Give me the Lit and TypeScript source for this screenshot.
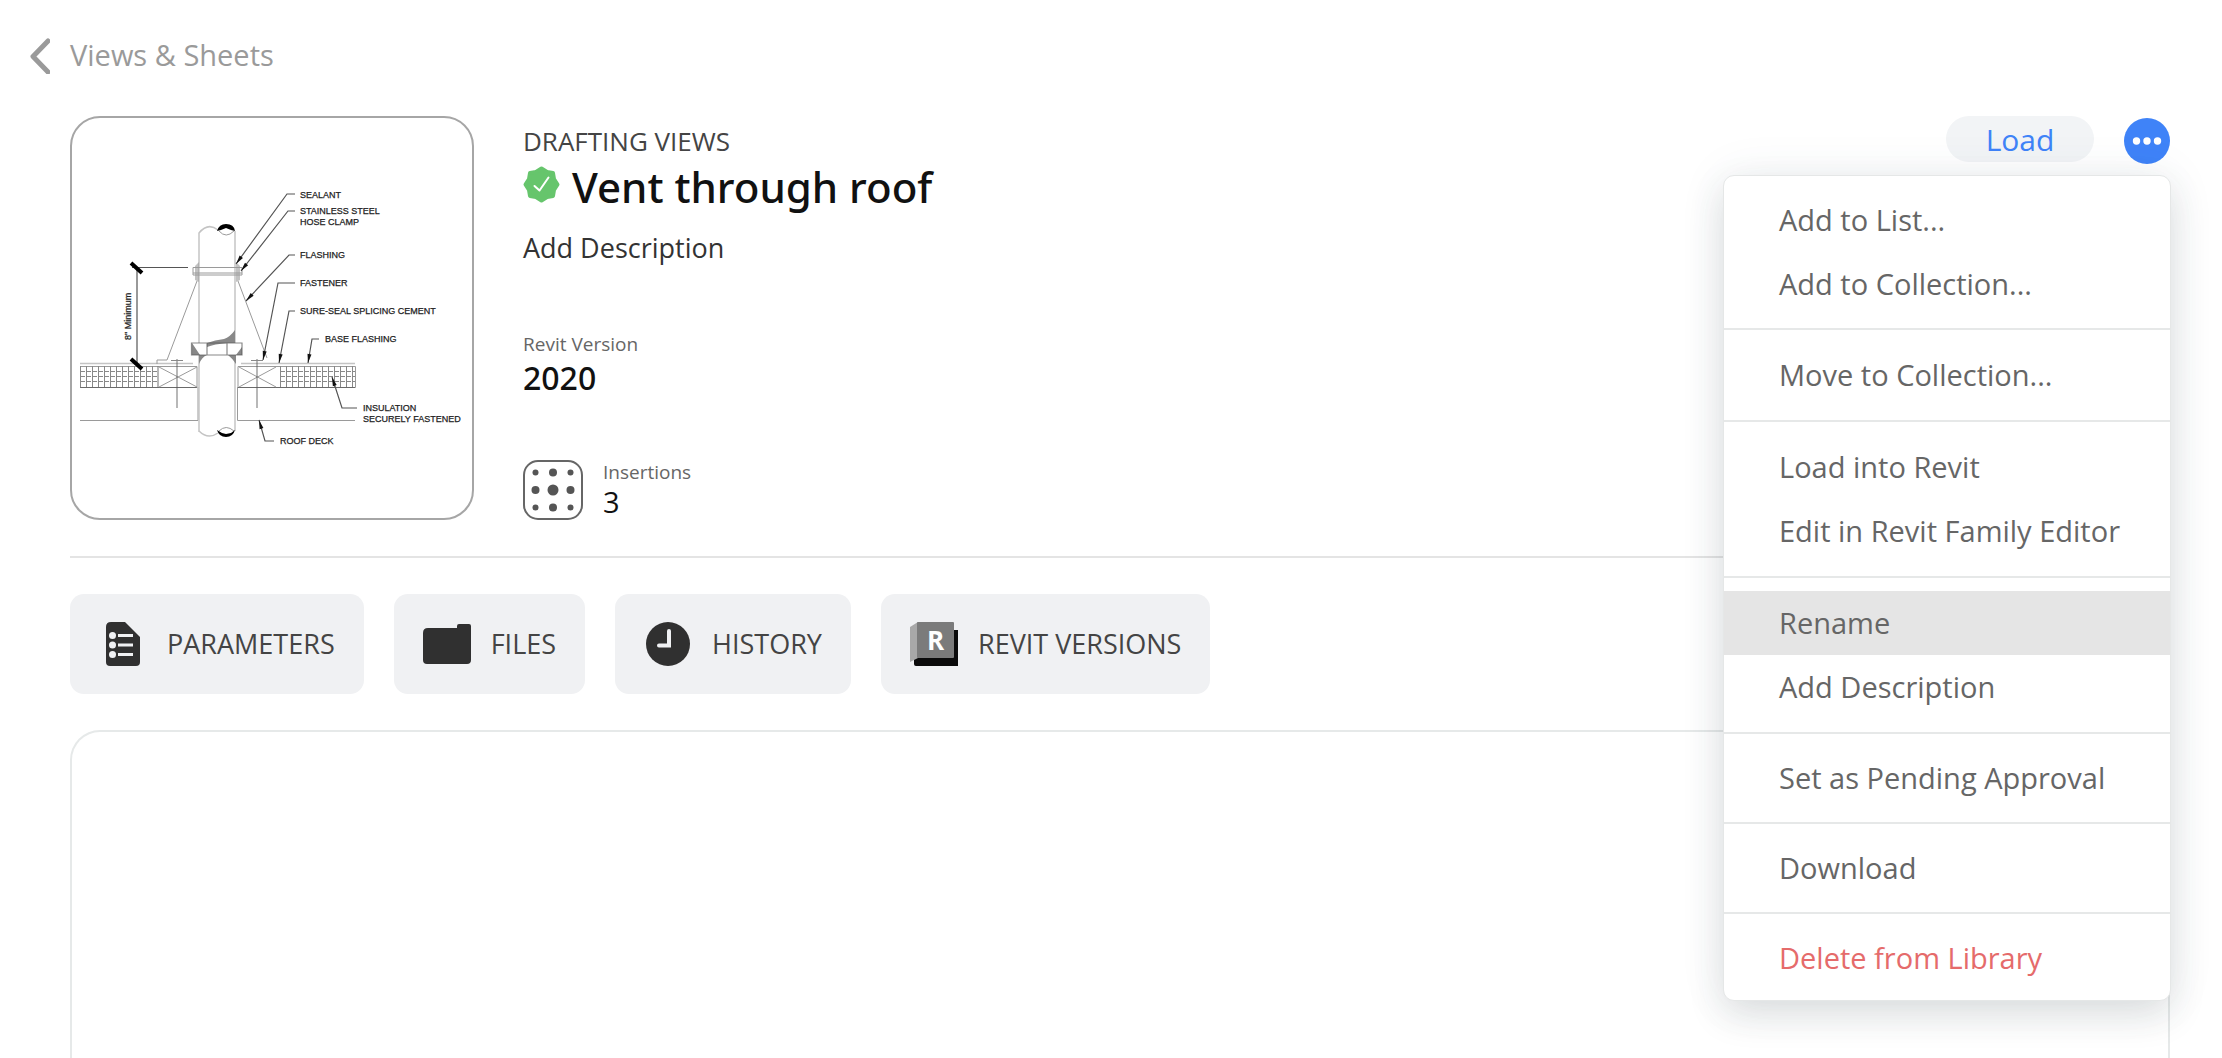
import { LitElement, html, svg, css } from "lit";
import { customElement, state } from "lit/decorators.js";
import { classMap } from "lit/directives/class-map.js";

interface MenuItem {
  label: string;
  active?: boolean;
  danger?: boolean;
}

const MENU: MenuItem[][] = [
  [{ label: "Add to List..." }, { label: "Add to Collection..." }],
  [{ label: "Move to Collection..." }],
  [{ label: "Load into Revit" }, { label: "Edit in Revit Family Editor" }],
  [{ label: "Rename", active: true }, { label: "Add Description" }],
  [{ label: "Set as Pending Approval" }],
  [{ label: "Download" }],
  [{ label: "Delete from Library", danger: true }],
];

/** Section drawing of a vent pipe passing through a roof. */
@customElement("vent-drawing")
export class VentDrawing extends LitElement {
  static styles = css`
    :host { display: block; }
    .drawing { display: block; width: 100%; height: auto; }
    .thin { fill: none; stroke: #9a9a9a; stroke-width: 1; }
    .pale { fill: none; stroke: #c4c4c4; stroke-width: 1.5; }
    .grid { fill: none; stroke: #888; stroke-width: 1; }
    .line { fill: none; stroke: #555; stroke-width: 1.2; }
    .tick { fill: none; stroke: #000; stroke-width: 4; }
    .head { fill: #111; }
    .note { font: 9px "Liberation Sans", Arial, sans-serif; fill: #222; stroke: #222; stroke-width: 0.25; }
  `;

  private notes: [number, number, string][] = [
    [300, 198, "SEALANT"],
    [300, 214, "STAINLESS STEEL"],
    [300, 225, "HOSE CLAMP"],
    [300, 258, "FLASHING"],
    [300, 286, "FASTENER"],
    [300, 314, "SURE-SEAL SPLICING CEMENT"],
    [325, 342, "BASE FLASHING"],
    [363, 411, "INSULATION"],
    [363, 422, "SECURELY FASTENED"],
    [280, 444, "ROOF DECK"],
  ];

  /** Each leader: start, elbow, tip. */
  private leaders: number[][] = [
    [295, 194, 287, 194, 236, 264],
    [295, 211, 288, 211, 241, 271],
    [295, 255, 289, 255, 246, 301],
    [295, 283, 278, 283, 263, 360],
    [295, 311, 289, 311, 279, 363],
    [319, 339, 312, 339, 308, 363],
    [357, 408, 342, 408, 332, 377],
    [274, 441, 265, 441, 259, 420],
  ];

  private leader([x0, y0, x1, y1, x2, y2]: number[]) {
    const len = Math.hypot(x2 - x1, y2 - y1);
    const ux = (x2 - x1) / len;
    const uy = (y2 - y1) / len;
    const bx = x2 - ux * 9;
    const by = y2 - uy * 9;
    return svg`
      <path class="line" d="M${x0} ${y0}H${x1}L${x2} ${y2}" />
      <path class="head" d="M${x2} ${y2}L${bx - uy * 2} ${by + ux * 2}L${bx + uy * 2} ${by - ux * 2}Z" />`;
  }

  private hatch(from: number, to: number) {
    const cols = [];
    for (let x = from; x <= to; x += 6) cols.push(svg`<path class="grid" d="M${x + 0.5} 366V387" />`);
    return svg`${cols}<path class="grid" stroke-dasharray="5 1" d="M${from} 371.5H${to}M${from} 376.5H${to}M${from} 381.5H${to}" />`;
  }

  render() {
    return html`
      <svg class="drawing" viewBox="72 118 400 400" role="img" aria-label="Vent through roof section">
        <path class="pale" d="M80 363.5H193M241 363.5H355" />
        <path class="thin" d="M80.5 366.5H197V387.5H80.5ZM238 366.5H355.5V387.5H238Z" />
        ${this.hatch(80, 157)} ${this.hatch(280, 355)}
        <path class="line" d="M158 366.5V387M80 387.5H197M238 387.5H355" stroke-opacity=".7" />
        <path class="thin" d="M159 367L197 387M159 387L197 367M239 367L276 387M239 387L276 367" />
        <path class="line" stroke-opacity=".7" d="M177 359V408M171 360.5H183M257 359V408M251 360.5H263" />
        <path class="thin" d="M80 420.5H198V387M355 420.5H237.5V387" />
        <path class="thin" d="M197 281L167 360H157V364M238 281L267 358" />
        <path d="M199 233Q208 222 217 230L235 231V431L217 433Q208 440 199 431Z" fill="#fff" />
        <path class="pale" d="M199 432V233Q208 222 218 230M235 231V431M199 431Q208 440 218 433" />
        <path d="M217 231Q219 224 226 224Q234 224 235 231L231 230L226 228L221 230Z" fill="#000" />
        <path class="thin" d="M219 231Q226 239 234 231M219 431Q226 424 234 431" />
        <path d="M217 430L222 433L226 434L231 433L235 430Q233 437 226 437Q219 437 217 430Z" fill="#000" />
        <path class="thin" d="M193 267.5H242V275H193ZM193 273H242" />
        <path d="M199 262L195 266V280L199 282ZM236 262L240 266V280L236 282Z" fill="#999" fill-opacity=".6" />
        <path d="M235 330V343H207Q215 340 224 339Q230 337 235 330ZM199 355H207Q202 357 199 364ZM228 355H236V364Q232 358 228 355Z" fill="#888" />
        <path d="M191.5 343H242V355H191.5Z" fill="#fff" />
        <path d="M192 343V355H200ZM242 347V355H236ZM207 343H228Q214 344 207 347Z" fill="#888" />
        <path class="line" stroke-opacity=".7" d="M191.5 343H242V355H191.5ZM207 343V355M227 343V355" />
        <path class="line" d="M132 267.5H188M137 267V364" />
        <path class="tick" d="M131 263L142 273M131 359L142 369" />
        ${this.leaders.map((l) => this.leader(l))}
        ${this.notes.map(([x, y, t]) => svg`<text class="note" x=${x} y=${y}>${t}</text>`)}
        <text class="note" transform="translate(131 340) rotate(-90)">8" Minimum</text>
      </svg>`;
  }
}

@customElement("app-root")
export class AppRoot extends LitElement {
  static styles = css`
    :host {
      display: block;
      font-family: "Open Sans", "Noto Sans", sans-serif;
      color: #111;
      background: #fff;
    }
    * { box-sizing: border-box; }
    button { font: inherit; color: inherit; border: 0; padding: 0; background: none; cursor: pointer; }
    svg { display: block; flex: none; }
    .page { display: flex; flex-direction: column; min-height: 100vh; padding: 36px 52px 0 28px; }
    .back { display: flex; align-items: center; gap: 20px; align-self: flex-start; height: 40px; font-size: 29px; line-height: 40px; color: #9a9a9a; text-decoration: none; }
    .back span { padding-bottom: 2px; }
    .content { display: flex; flex-direction: column; flex: 1; margin: 40px 0 0 42px; }
    .summary { display: flex; align-items: stretch; gap: 49px; padding-bottom: 36px; border-bottom: 2px solid #e4e4e4; }
    .thumb { flex: none; width: 404px; height: 404px; border: 2px solid #a6a6a6; border-radius: 30px; overflow: hidden; }
    .info { display: flex; flex-direction: column; flex: 1; }
    .kind { margin-top: 11px; font-size: 26px; line-height: 28px; color: #444; }
    .name { display: flex; align-items: center; gap: 12px; margin: 0; font-family: "Noto Sans", "Open Sans", sans-serif; font-size: 42px; line-height: 63px; font-weight: 500; }
    .name svg { margin-bottom: 4px; }
    .desc { align-self: flex-start; margin-top: 10px; font-size: 27px; line-height: 40px; color: #333; }
    .label { font-size: 19px; line-height: 24px; color: #666; }
    .value { font-family: "Noto Sans", "Open Sans", sans-serif; font-size: 32px; line-height: 44px; font-weight: 500; }
    .version { margin-top: 64px; }
    .insertions { display: flex; align-items: center; gap: 20px; margin-top: auto; height: 60px; }
    .count { font-size: 29px; line-height: 36px; }
    .actions { position: relative; display: flex; align-items: flex-start; gap: 30px; }
    .load { width: 148px; height: 46px; padding-top: 2px; border-radius: 24px; background: #f2f4f6; color: #3f83f8; font-size: 30px; line-height: 44px; }
    .more { margin-top: 2px; width: 46px; height: 46px; }
    .menu { position: absolute; top: 59px; right: -1px; z-index: 2; width: 448px; background: #fff; border: 1px solid #e5e7e7; border-radius: 11px; box-shadow: 0 14px 36px rgba(40, 60, 60, 0.14), 0 0 50px rgba(60, 80, 110, 0.07); }
    .group { padding: 13px 0; }
    .group:first-child, .group:nth-last-child(-n + 3) { padding: 12px 0; }
    .group:last-child { padding-bottom: 10px; }
    .group + .group { border-top: 2px solid #e6e8e8; }
    .item { display: block; width: 100%; height: 64px; padding-left: 55px; text-align: left; font-size: 29px; line-height: 64px; color: #666; white-space: nowrap; }
    .active { background: #e5e5e5; }
    .danger { color: #e56b6b; }
    .tabs { display: flex; flex-wrap: wrap; gap: 30px; margin: 36px 0; }
    .tab { display: flex; align-items: center; gap: 20px; height: 100px; padding: 0 29px; border-radius: 14px; background: #f0f1f3; color: #444; font-size: 27px; line-height: 40px; white-space: nowrap; }
    .panel { flex: 1; min-height: 300px; border: 2px solid #e6e9e9; border-bottom: 0; border-radius: 30px 30px 0 0; }
    .mark { font: bold 26px "Open Sans", sans-serif; fill: #fff; }
  `;

  @state() private open = true;

  private tabs = [
    {
      label: "PARAMETERS",
      icon: svg`<path fill="#303030" d="M12 0H26L41 15V40Q41 44 37 44H11Q7 44 7 40V5Q7 0 12 0Z" />
        <g fill="#f0f1f3"><circle cx="13.5" cy="13.5" r="3.5" /><circle cx="13.5" cy="23" r="3.5" /><circle cx="13.5" cy="32.5" r="3.5" />
        <path d="M19 12H34V15H19ZM19 21.5H34V24.5H19ZM19 31H34V34H19Z" /></g>`,
    },
    {
      label: "FILES",
      icon: svg`<path fill="#303030" d="M5 6H34V4Q34 2 36 2H46Q48 2 48 4V38Q48 42 44 42H4Q0 42 0 38V11Q0 6 5 6Z" />`,
    },
    {
      label: "HISTORY",
      icon: svg`<circle cx="24" cy="22" r="22" fill="#303030" />
        <path d="M25 9V23.5H15" fill="none" stroke="#f0f1f3" stroke-width="4" stroke-linecap="round" />`,
    },
    {
      label: "REVIT VERSIONS",
      icon: svg`<path fill="#0b0b0b" d="M4 34H40V8H48V44H6Q4 44 4 42Z" />
        <path fill="#a8a8a8" d="M0 5L8 0V36L0 40Z" /><rect x="7" width="37" height="36" rx="1" fill="#7b7b7b" />
        <text class="mark" x="17" y="28">R</text>`,
    },
  ];

  private menu() {
    return html`<div class="menu" role="menu">
      ${MENU.map(
        (group) => html`<div class="group" role="group">
          ${group.map(
            (i) => html`<button role="menuitem" class=${classMap({ item: true, active: !!i.active, danger: !!i.danger })}>${i.label}</button>`,
          )}
        </div>`,
      )}
    </div>`;
  }

  render() {
    return html`
      <main class="page">
        <a class="back" href="#views">
          <svg width="22" height="36" viewBox="0 0 22 36"><path d="M20 3L5 18.5L20 34" fill="none" stroke="#9a9a9a" stroke-width="5" stroke-linecap="round" stroke-linejoin="round" /></svg>
          <span>Views &amp; Sheets</span>
        </a>
        <div class="content">
          <section class="summary">
            <div class="thumb"><vent-drawing></vent-drawing></div>
            <div class="info">
              <div class="kind">DRAFTING VIEWS</div>
              <h1 class="name">
                <svg width="37" height="37" viewBox="-18.5 -18.5 37 37">
                  <path fill="#66c56c" stroke="#66c56c" stroke-width="4" stroke-linejoin="round" d="M0 -16L5.5 -12.5L11.5 -11.5L12.5 -5.5L16 0L12.5 5.5L11.5 11.5L5.5 12.5L0 16L-5.5 12.5L-11.5 11.5L-12.5 5.5L-16 0L-12.5 -5.5L-11.5 -11.5L-5.5 -12.5Z" />
                  <path fill="none" stroke="#fff" stroke-width="2" stroke-linecap="round" stroke-linejoin="round" d="M-7 1.5L-2 6L7 -7" />
                </svg>
                <span>Vent through roof</span>
              </h1>
              <button class="desc">Add Description</button>
              <div class="version">
                <div class="label">Revit Version</div>
                <div class="value">2020</div>
              </div>
              <div class="insertions">
                <svg width="60" height="60" viewBox="0 0 60 60">
                  <rect x="1" y="1" width="58" height="58" rx="14" fill="none" stroke="#666" stroke-width="2" />
                  <g fill="#555"><circle cx="12.5" cy="12.5" r="3" /><circle cx="47.5" cy="12.5" r="3" /><circle cx="12.5" cy="47.5" r="3" /><circle cx="47.5" cy="47.5" r="3" />
                  <circle cx="30" cy="12.5" r="4" /><circle cx="12.5" cy="30" r="4" /><circle cx="47.5" cy="30" r="4" /><circle cx="30" cy="47.5" r="4" /><circle cx="30" cy="30" r="5.5" /></g>
                </svg>
                <div>
                  <div class="label">Insertions</div>
                  <div class="count">3</div>
                </div>
              </div>
            </div>
            <div class="actions">
              <button class="load">Load</button>
              <button class="more" aria-label="More actions" aria-expanded=${this.open} @click=${() => (this.open = !this.open)}>
                <svg width="46" height="46" viewBox="0 0 46 46"><circle cx="23" cy="23" r="23" fill="#3f83f8" /><g fill="#fff"><circle cx="12.5" cy="23" r="3.7" /><circle cx="23" cy="23" r="3.7" /><circle cx="33.5" cy="23" r="3.7" /></g></svg>
              </button>
              ${this.open ? this.menu() : ""}
            </div>
          </section>
          <nav class="tabs">
            ${this.tabs.map((t) => html`<button class="tab"><svg width="48" height="44" viewBox="0 0 48 44">${t.icon}</svg><span>${t.label}</span></button>`)}
          </nav>
          <section class="panel"></section>
        </div>
      </main>`;
  }
}
